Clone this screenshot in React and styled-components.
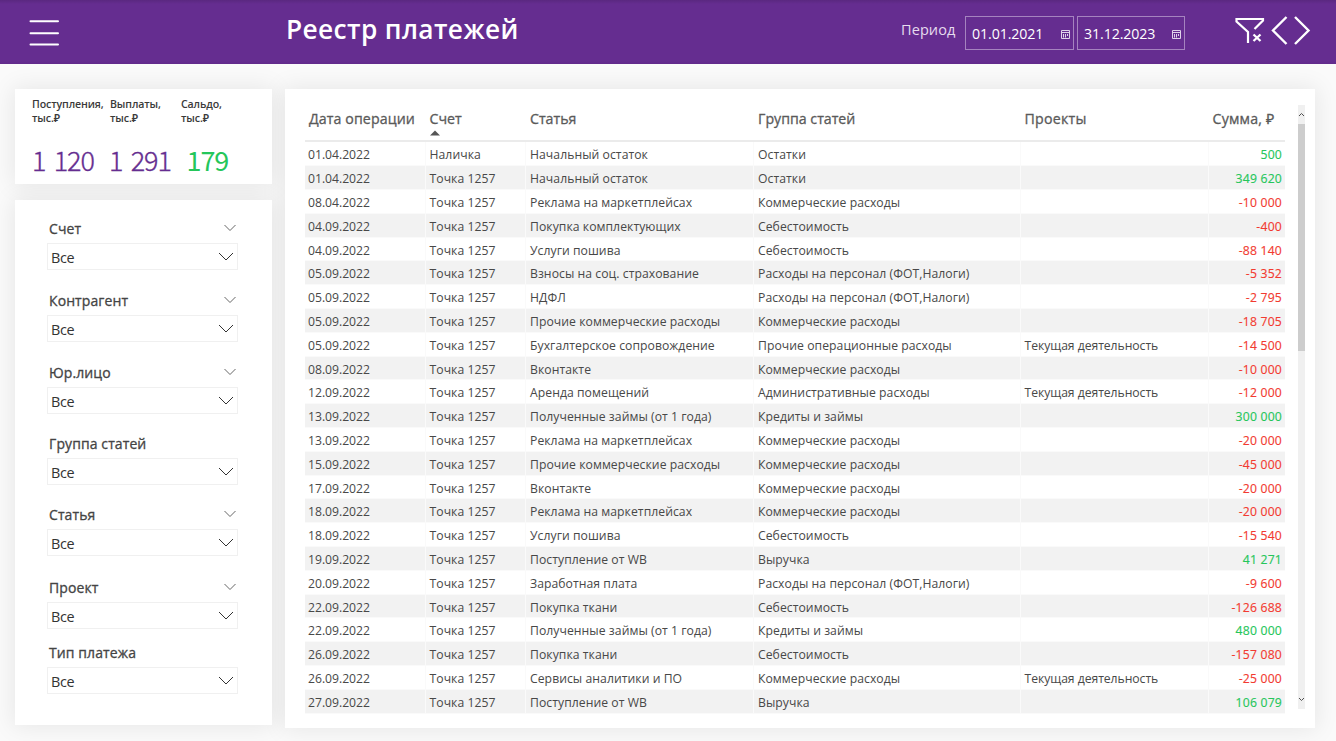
import React from 'react';
import styled, { createGlobalStyle } from 'styled-components';

const GlobalStyle = createGlobalStyle`
  * { box-sizing: border-box; }
  body {
    margin: 0;
    background: #fafafa;
    font-family: "Open Sans", "Noto Sans", sans-serif;
    color: #444;
  }
`;

const Page = styled.div`
  width: 1336px;
  height: 741px;
  overflow: hidden;
`;

const TopBar = styled.header`
  position: relative;
  height: 64px;
  display: flex;
  align-items: flex-start;
  background: linear-gradient(#5a2880 0, #652d90 4px, #652d90 61px, #612a8b 64px);
  color: #fff;
`;

const MenuIcon = styled.svg`
  margin: 17px 0 0 28px;
`;

const Title = styled.h1`
  width: 615px;
  margin: 10px 0 0 225px;
  font-size: 26.3px;
  line-height: 38px;
  font-weight: 600;
  letter-spacing: 0.38px;
  white-space: nowrap;
`;

const PeriodLabel = styled.span`
  width: 64px;
  margin-top: 20px;
  font-size: 14.5px;
  line-height: 20px;
  letter-spacing: 0.1px;
  color: #e6dcee;
`;

const DateField = styled.div`
  width: ${(p) => p.$width}px;
  height: 34px;
  margin: 16px 3px 0 0;
  padding: 1px 3px 0 6px;
  display: flex;
  align-items: center;
  justify-content: space-between;
  border: 1px solid #a583bf;
  font-size: 14.2px;
  letter-spacing: -0.1px;
`;

const CalendarGlyph = styled.svg`
  margin-top: 2px;
`;

const ActionIcons = styled.svg`
  margin: 14px 0 0 47px;
`;

const Content = styled.main`
  display: flex;
  align-items: flex-start;
  gap: 13px;
  padding: 25px 0 0 15px;
`;

const Sidebar = styled.aside`
  width: 257px;
  display: flex;
  flex-direction: column;
  gap: 16px;
`;

const Card = styled.section`
  position: relative;
  background: #fff;

  &::before {
    content: '';
    position: absolute;
    inset: 0;
    z-index: -1;
    box-shadow: 0 0 22px 2px rgba(0, 0, 0, 0.08);
  }
`;

const Summary = styled(Card)`
  height: 95px;
  display: flex;
  padding: 8px 0 0 17px;
`;

const Metric = styled.div`
  width: ${(p) => p.$width}px;
`;

const MetricLabel = styled.div`
  height: 45px;
  font-size: 10.6px;
  line-height: 14px;
  font-weight: 600;
  letter-spacing: -0.12px;
  color: #3a3a3a;
  white-space: nowrap;
`;

const MetricValue = styled.div`
  margin-left: ${(p) => p.$indent}px;
  font-family: "Noto Sans CJK SC", "Open Sans", sans-serif;
  font-size: 27px;
  line-height: 35px;
  font-weight: ${(p) => (p.$positive ? 400 : 300)};
  letter-spacing: -1.1px;
  word-spacing: 3.5px;
  color: ${(p) => (p.$positive ? '#25c65a' : '#652d90')};
  -webkit-text-stroke: ${(p) => (p.$positive ? 0 : 0.35)}px currentColor;
  white-space: nowrap;
`;

const Filters = styled(Card)`
  height: 525px;
  padding: 18px 34px 0 32px;
`;

const Filter = styled.div`
  height: ${(p) => p.$height}px;
`;

const FilterHead = styled.div`
  height: 25px;
  display: flex;
  justify-content: space-between;
  padding: 0 2px;
  font-size: 14px;
  line-height: 21px;
  letter-spacing: 0.1px;
  -webkit-text-stroke: 0.3px #444;
`;

const Select = styled.div`
  height: 27px;
  display: flex;
  justify-content: space-between;
  padding: 0 3px 0 3px;
  border: 1px solid #f0f0f0;
  font-size: 14.4px;
  line-height: 28px;
  letter-spacing: -0.4px;
  color: #333;
`;

const Chevron = styled.svg`
  margin-top: ${(p) => p.$top}px;
  fill: none;
  stroke: ${(p) => p.$color};
  stroke-width: 1;
`;

const TableCard = styled(Card)`
  width: 1030px;
  height: 639px;
  display: flex;
  gap: 13px;
  padding: 15px 0 0 20px;
`;

const Table = styled.div`
  width: 980px;
`;

const columns = '120.5px 100.5px 228px 266.5px 188px 76.5px';

const HeadRow = styled.div`
  height: 38.45px;
  display: grid;
  grid-template-columns: ${columns};
  border-bottom: 2px solid #ebebeb;
  font-size: 14.2px;
  line-height: 29px;
  color: #5a5a5a;
  -webkit-text-stroke: 0.3px #5a5a5a;
`;

const HeadCell = styled.div`
  position: relative;
  padding-left: 4px;
  letter-spacing: ${(p) => p.$spacing || 0}px;
  white-space: nowrap;
`;

const SortArrow = styled.svg`
  position: absolute;
  left: 4px;
  top: 26px;
`;

const Row = styled.div`
  height: 23.81px;
  display: grid;
  grid-template-columns: ${columns};
  font-size: 12.2px;
  line-height: 25px;
  color: #484848;
  --cell: ${(p) => (p.$striped ? '#f2f2f2' : '#fff')};
`;

const Cell = styled.div`
  height: 23.81px;
  padding: 0 4px;
  background: var(--cell);
  border-right: 1px solid #fafafa;
  border-bottom: 1px solid #fafafa;
  letter-spacing: 0.05px;
  white-space: nowrap;

  &:first-child {
    padding-left: 3px;
    letter-spacing: -0.02px;
  }

  &:nth-child(5) {
    letter-spacing: -0.05px;
  }
`;

const Amount = styled(Cell)`
  padding-right: 3px;
  text-align: right;
  border-right: 0;
  letter-spacing: 0.2px;
  color: ${(p) => (p.$negative ? '#f23a30' : '#25c65a')};
  -webkit-text-stroke: 0.15px currentColor;
`;

const Scrollbar = styled.div`
  width: 7px;
  height: 604px;
  margin-top: 1px;
  display: flex;
  flex-direction: column;
  align-items: center;
  background: #f0f0f0;
`;

const Thumb = styled.div`
  width: 7px;
  height: 227px;
  margin-bottom: auto;
  background: #cdcdcd;
`;

const ScrollArrow = styled.svg`
  height: 19px;
  width: 7px;
  flex: none;
  fill: none;
  stroke: #505050;
`;

const filters = [
  ['Счет', 72, true],
  ['Контрагент', 72, true],
  ['Юр.лицо', 71, true],
  ['Группа статей', 71, false],
  ['Статья', 73, true],
  ['Проект', 65, true],
  ['Тип платежа', 52, false],
];

const T = 'Точка 1257';
const rows = [
  ['01.04.2022', 'Наличка', 'Начальный остаток', 'Остатки', '', '500'],
  ['01.04.2022', T, 'Начальный остаток', 'Остатки', '', '349 620'],
  ['08.04.2022', T, 'Реклама на маркетплейсах', 'Коммерческие расходы', '', '-10 000'],
  ['04.09.2022', T, 'Покупка комплектующих', 'Себестоимость', '', '-400'],
  ['04.09.2022', T, 'Услуги пошива', 'Себестоимость', '', '-88 140'],
  ['05.09.2022', T, 'Взносы на соц. страхование', 'Расходы на персонал (ФОТ,Налоги)', '', '-5 352'],
  ['05.09.2022', T, 'НДФЛ', 'Расходы на персонал (ФОТ,Налоги)', '', '-2 795'],
  ['05.09.2022', T, 'Прочие коммерческие расходы', 'Коммерческие расходы', '', '-18 705'],
  ['05.09.2022', T, 'Бухгалтерское сопровождение', 'Прочие операционные расходы', 'Текущая деятельность', '-14 500'],
  ['08.09.2022', T, 'Вконтакте', 'Коммерческие расходы', '', '-10 000'],
  ['12.09.2022', T, 'Аренда помещений', 'Административные расходы', 'Текущая деятельность', '-12 000'],
  ['13.09.2022', T, 'Полученные займы (от 1 года)', 'Кредиты и займы', '', '300 000'],
  ['13.09.2022', T, 'Реклама на маркетплейсах', 'Коммерческие расходы', '', '-20 000'],
  ['15.09.2022', T, 'Прочие коммерческие расходы', 'Коммерческие расходы', '', '-45 000'],
  ['17.09.2022', T, 'Вконтакте', 'Коммерческие расходы', '', '-20 000'],
  ['18.09.2022', T, 'Реклама на маркетплейсах', 'Коммерческие расходы', '', '-20 000'],
  ['18.09.2022', T, 'Услуги пошива', 'Себестоимость', '', '-15 540'],
  ['19.09.2022', T, 'Поступление от WB', 'Выручка', '', '41 271'],
  ['20.09.2022', T, 'Заработная плата', 'Расходы на персонал (ФОТ,Налоги)', '', '-9 600'],
  ['22.09.2022', T, 'Покупка ткани', 'Себестоимость', '', '-126 688'],
  ['22.09.2022', T, 'Полученные займы (от 1 года)', 'Кредиты и займы', '', '480 000'],
  ['26.09.2022', T, 'Покупка ткани', 'Себестоимость', '', '-157 080'],
  ['26.09.2022', T, 'Сервисы аналитики и ПО', 'Коммерческие расходы', 'Текущая деятельность', '-25 000'],
  ['27.09.2022', T, 'Поступление от WB', 'Выручка', '', '106 079'],
];

const CalendarIcon = () => (
  <CalendarGlyph width="9" height="9" viewBox="0 0 9 9" fill="none" stroke="#e0d3ea">
    <path d="M.5 .5h8v8h-8z" />
    <path d="M0 2.500h9" />
    <path d="M2.500 4v3.500M4.500 4v3.500M6.500 4v2" strokeWidth="1" />
  </CalendarGlyph>
);

export default function App() {
  return (
    <Page>
      <GlobalStyle />
      <TopBar>
        <MenuIcon width="33" height="32" stroke="#fff" strokeWidth="2" strokeLinecap="round">
          <path d="M2.500 4.300h27.500M2.500 16.200h27.500M2.500 27.500h27.500" />
        </MenuIcon>
        <Title>Реестр платежей</Title>
        <PeriodLabel>Период</PeriodLabel>
        <DateField $width={109}>01.01.2021<CalendarIcon /></DateField>
        <DateField $width={108}>31.12.2023<CalendarIcon /></DateField>
        <ActionIcons width="80" height="34" fill="none" stroke="#fff" strokeWidth="2">
          <path d="M19.500 15l8.500-8.500V5H1.500V7.500l11.500 10.500V29" strokeWidth="2.200" />
          <path d="M18.500 20.500l7 6.500M25.500 20.500l-7 6.500" strokeWidth="2.300" />
          <path d="M51.500 3L38 16.500 51.500 30M60 3L73.500 16.500 60 30" strokeWidth="2.400" />
        </ActionIcons>
      </TopBar>
      <Content>
        <Sidebar>
          <Summary>
            <Metric $width={78}>
              <MetricLabel>Поступления,<br />тыс.₽</MetricLabel>
              <MetricValue $indent={0}>1 120</MetricValue>
            </Metric>
            <Metric $width={71}>
              <MetricLabel>Выплаты,<br />тыс.₽</MetricLabel>
              <MetricValue $indent={-1}>1 291</MetricValue>
            </Metric>
            <Metric $width={80}>
              <MetricLabel>Сальдо,<br />тыс.₽</MetricLabel>
              <MetricValue $indent={5.5} $positive>179</MetricValue>
            </Metric>
          </Summary>
          <Filters>
            {filters.map(([name, height, collapsible]) => (
              <Filter key={name} $height={height}>
                <FilterHead>
                  {name}
                  {collapsible && (
                    <Chevron $top={6} $color="#666" width="12" height="8"><path d="M.5 1l5.500 5.500L11.500 1" /></Chevron>
                  )}
                </FilterHead>
                <Select>
                  Все
                  <Chevron $top={8} $color="#333" width="16" height="10"><path d="M1 1l7 7L15 1" /></Chevron>
                </Select>
              </Filter>
            ))}
          </Filters>
        </Sidebar>
        <TableCard>
          <Table>
            <HeadRow>
              <HeadCell $spacing={0.1}>Дата операции</HeadCell>
              <HeadCell>
                Счет
                <SortArrow width="10" height="6"><path d="M0 5.500L5 .5 10 5.500z" fill="#555" /></SortArrow>
              </HeadCell>
              <HeadCell>Статья</HeadCell>
              <HeadCell>Группа статей</HeadCell>
              <HeadCell $spacing={0.25}>Проекты</HeadCell>
              <HeadCell $spacing={0.2}>Сумма, ₽</HeadCell>
            </HeadRow>
            {rows.map((r, i) => (
              <Row key={i} $striped={i % 2 === 1}>
                {r.slice(0, 5).map((text, c) => (
                  <Cell key={c}>{text}</Cell>
                ))}
                <Amount $negative={r[5][0] === '-'}>{r[5]}</Amount>
              </Row>
            ))}
          </Table>
          <Scrollbar>
            <ScrollArrow><path d="M1 11l2.500-2.500L6 11" /></ScrollArrow>
            <Thumb />
            <ScrollArrow><path d="M1 8l2.500 2.500L6 8" /></ScrollArrow>
          </Scrollbar>
        </TableCard>
      </Content>
    </Page>
  );
}
